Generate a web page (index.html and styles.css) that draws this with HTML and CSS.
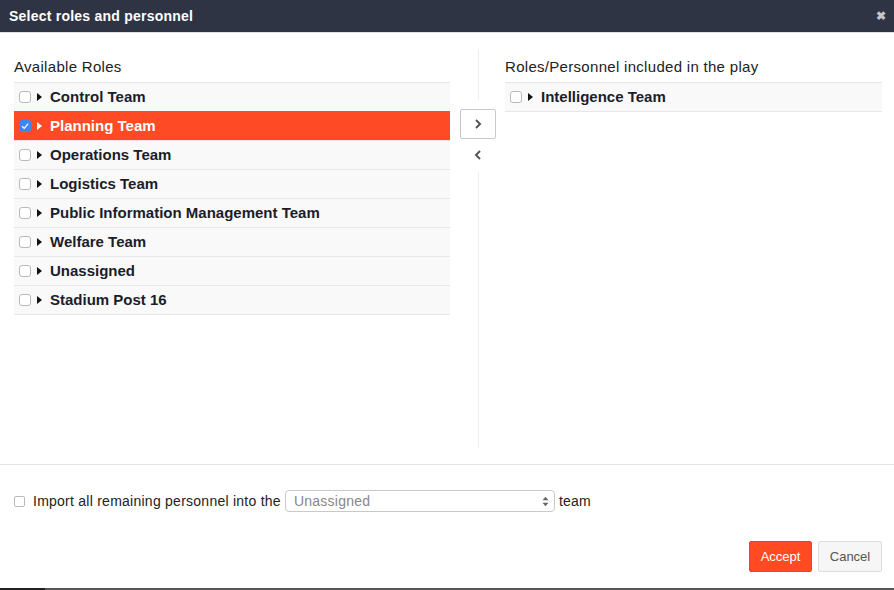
FILE: index.html
```html
<!DOCTYPE html>
<html>
<head>
<meta charset="utf-8">
<link rel="stylesheet" href="styles.css">
</head>
<body>
<div class="modal">
  <div class="header">
    <span class="title">Select roles and personnel</span>
    <span class="close">&#10006;</span>
  </div>
  <div class="body">
    <div class="col left">
      <div class="col-title">Available Roles</div>
      <div class="list">
        <div class="row"><span class="cb"></span><span class="tri"></span><span class="name">Control Team</span></div>
        <div class="row selected"><span class="cb checked"><svg width="10" height="10" viewBox="0 0 10 10"><path d="M2 5.2 L4.2 7.4 L8.2 2.6" fill="none" stroke="#fff" stroke-width="1.3"/></svg></span><span class="tri"></span><span class="name">Planning Team</span></div>
        <div class="row"><span class="cb"></span><span class="tri"></span><span class="name">Operations Team</span></div>
        <div class="row"><span class="cb"></span><span class="tri"></span><span class="name">Logistics Team</span></div>
        <div class="row"><span class="cb"></span><span class="tri"></span><span class="name">Public Information Management Team</span></div>
        <div class="row"><span class="cb"></span><span class="tri"></span><span class="name">Welfare Team</span></div>
        <div class="row"><span class="cb"></span><span class="tri"></span><span class="name">Unassigned</span></div>
        <div class="row"><span class="cb"></span><span class="tri"></span><span class="name">Stadium Post 16</span></div>
      </div>
    </div>
    <div class="center">
      <div class="vline top"></div>
      <div class="move">
        <button class="mv boxed"><svg width="10" height="12" viewBox="0 0 10 12"><path d="M3 2 L7 6 L3 10" fill="none" stroke="#555" stroke-width="2"/></svg></button>
        <button class="mv"><svg width="10" height="12" viewBox="0 0 10 12"><path d="M7 2 L3 6 L7 10" fill="none" stroke="#555" stroke-width="2"/></svg></button>
      </div>
      <div class="vline bottom"></div>
    </div>
    <div class="col right">
      <div class="col-title">Roles/Personnel included in the play</div>
      <div class="list">
        <div class="row"><span class="cb"></span><span class="tri"></span><span class="name">Intelligence Team</span></div>
      </div>
    </div>
  </div>
  <div class="footer">
    <div class="import">
      <span class="cb small"></span>
      <span class="label">Import all remaining personnel into the</span>
      <span class="select"><span class="sel-text">Unassigned</span><svg class="arrows" width="7" height="11" viewBox="0 0 7 11"><path d="M0.5 4.2 L3.5 0.8 L6.5 4.2 Z M0.5 6.8 L3.5 10.2 L6.5 6.8 Z" fill="#666"/></svg></span>
      <span class="label">team</span>
    </div>
    <div class="actions">
      <button class="btn accept">Accept</button>
      <button class="btn cancel">Cancel</button>
    </div>
  </div>
  <div class="bottom-bar"><span class="dark"></span></div>
</div>
</body>
</html>
```
FILE: styles.css
```css
* { box-sizing: border-box; }
html, body { margin: 0; padding: 0; background: #fff; }
body { font-family: "Liberation Sans", Arial, sans-serif; color: #222; }
.modal { width: 894px; height: 590px; display: flex; flex-direction: column; }
.header {
  height: 33px;
  background: #2e3444;
  border-bottom: 1px solid #dfe1e6;
  display: flex;
  align-items: center;
  justify-content: space-between;
  padding: 0 8px 1px 9px;
}
.title { color: #fff; font-weight: bold; font-size: 14px; letter-spacing: 0.23px; }
.close { color: #c3c6cc; font-size: 12px; font-weight: bold; }
.body {
  height: 432px;
  display: flex;
  padding: 16px 12px 16px 14px;
  border-bottom: 1px solid #e5e5e5;
}
.col { display: flex; flex-direction: column; }
.left { width: 436px; }
.right { flex: 1; }
.col-title { font-size: 15px; letter-spacing: 0.3px; line-height: 20px; padding: 8px 0 5px; color: #222; }
.list { border-bottom: 1px solid #e6e6e6; }
.row {
  height: 29px;
  border-top: 1px solid #e6e6e6;
  background: #f9f9f9;
  display: flex;
  align-items: center;
  padding-left: 5px;
  padding-bottom: 1px;
}
.row.selected { background: #ff4a26; border-top-color: #ff4a26; }
.row.selected .name { color: #fff; }
.row.selected .tri { border-left-color: #fff; }
.cb {
  width: 12px; height: 12px;
  border: 1px solid #b9b9b9;
  border-radius: 3px;
  background: #fff;
  display: inline-flex; align-items: center; justify-content: center;
  flex: none;
}
.cb.checked { background: #3a86f5; border-color: #3a86f5; }
.tri {
  width: 0; height: 0;
  border-top: 4px solid transparent;
  border-bottom: 4px solid transparent;
  border-left: 5px solid #111;
  margin-left: 6px;
  flex: none;
}
.name { font-weight: bold; font-size: 15px; color: #1b1d2a; margin-left: 8px; }
.center { width: 55px; display: flex; flex-direction: column; }
.vline { width: 1px; background: #eeeeee; margin-left: 28px; }
.vline.top { height: 51px; }
.vline.bottom { flex: 1; }
.move { height: 72px; display: flex; flex-direction: column; align-items: center; padding-top: 9px; padding-left: 1px; }
.mv {
  width: 36px; height: 30px;
  background: #fff;
  border: 1px solid transparent;
  border-radius: 2px;
  padding: 0;
  display: flex; align-items: center; justify-content: center;
}
.mv + .mv { height: 16px; margin-top: 8px; }
.mv.boxed { border-color: #c8c8c8; }
.footer { flex: 1; display: flex; flex-direction: column; }
.import {
  display: flex; align-items: center;
  padding: 25px 0 0 14px;
  height: 47px;
}
.cb.small { width: 11px; height: 11px; border-radius: 2px; margin-right: 8px; }
.label { font-size: 14px; letter-spacing: 0.25px; color: #222; }
.select {
  width: 270px; height: 22px;
  margin: 0 4px 0 4px;
  border: 1px solid #c9c9c9;
  border-radius: 4px;
  display: flex; align-items: center; justify-content: space-between;
  padding: 0 5px 0 8px;
}
.sel-text { font-size: 14px; letter-spacing: 0.25px; color: #888; }
.actions { display: flex; justify-content: flex-end; gap: 6px; padding: 29px 12px 0 0; }
.btn {
  height: 31px;
  border-radius: 2px;
  font-family: "Liberation Sans", Arial, sans-serif;
  font-size: 13px;
  padding: 0;
}
.accept { width: 63px; background: #ff4a22; color: #fff; border: 1px solid #f0441e; }
.cancel { width: 64px; background: #f6f6f6; color: #555; border: 1px solid #dcdcdc; }
.bottom-bar { margin-top: auto; height: 2px; background: #575757; display: flex; }
.dark { width: 45px; background: #222; }
```
